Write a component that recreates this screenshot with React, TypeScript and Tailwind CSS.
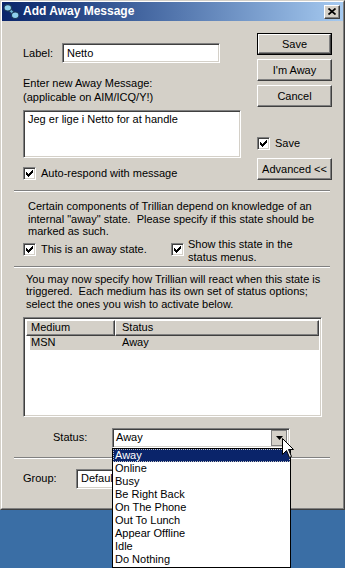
import React from "react";

const sunken =
  "border border-[#808080] border-r-white border-b-white shadow-[inset_1px_1px_0_#404040,inset_-1px_-1px_0_#d4d0c8]";
const raised =
  "border border-white border-r-[#404040] border-b-[#404040] shadow-[inset_-1px_-1px_0_#808080,inset_1px_1px_0_#d4d0c8]";

function Check() {
  return (
    <span className={`w-[13px] h-[13px] shrink-0 bg-white flex items-center justify-center ${sunken}`}>
      <svg width="7" height="7" viewBox="0 0 7 7">
        <path d="M0 2h1v1h1v1h1v-1h1v-1h1v-1h1v-1h1v3h-1v1h-1v1h-1v1h-1v1h-1v-1h-1v-1h-1z" fill="#000" />
      </svg>
    </span>
  );
}

function Btn({ children, def }: { children: React.ReactNode; def?: boolean }) {
  const inner = (
    <div className={`w-full h-full flex items-center justify-center bg-[#d4d0c8] ${raised}`}>{children}</div>
  );
  if (def) return <div className="w-[75px] h-[22px] border border-black">{inner}</div>;
  return <div className="w-[75px] h-[22px]">{inner}</div>;
}

function Sep() {
  return <div className="ml-[12px] w-[316px] h-0 border-t border-b border-t-[#808080] border-b-white" />;
}

function Arrow() {
  return (
    <svg width="7" height="4" viewBox="0 0 7 4">
      <path d="M0 0h7L3.5 4z" fill="#000" />
    </svg>
  );
}

export default function App() {
  const items = ["Away", "Online", "Busy", "Be Right Back", "On The Phone", "Out To Lunch", "Appear Offline", "Idle", "Do Nothing"];
  return (
    <div className="relative w-[345px] h-[568px] bg-[#3a6ea5] overflow-hidden text-[11px] leading-[13px] text-black font-['Liberation_Sans',Arial,sans-serif]">
      <div className="w-[345px] h-[510px] bg-[#d4d0c8] border border-[#d4d0c8] border-r-[#404040] border-b-[#404040]">
        <div className="h-full border border-white border-r-[#808080] border-b-[#808080] flex flex-col">
          {/* title bar */}
          <div className="h-[19px] flex items-center bg-linear-to-r from-[#0a246a] to-[#a6caf0] pr-[3px]">
            <svg className="ml-[1px]" width="17" height="17" viewBox="0 0 16 16">
              <path d="M4 4 L12 12" stroke="#1c3a5a" strokeWidth="4" strokeLinecap="round" />
              <path d="M4 4 L12 12" stroke="#6fb7d8" strokeWidth="2" strokeLinecap="round" />
              <ellipse cx="4.5" cy="4.5" rx="3.5" ry="3" fill="#8fd0ec" stroke="#1c3a5a" strokeWidth="1" />
              <ellipse cx="11.5" cy="11.5" rx="3.5" ry="3" fill="#8fd0ec" stroke="#1c3a5a" strokeWidth="1" />
            </svg>
            <span className="ml-[3px] text-white font-bold text-[12px]">Add Away Message</span>
            <div className="flex-1" />
            <div className={`w-[16px] h-[14px] bg-[#d4d0c8] flex items-center justify-center ${raised}`}>
              <svg width="8" height="7" viewBox="0 0 8 7">
                <path d="M0.5 0.5L7.5 6.5M7.5 0.5L0.5 6.5" stroke="#000" strokeWidth="1.7" />
              </svg>
            </div>
          </div>

          {/* top section */}
          <div className="flex pl-[21px]">
            <div className="w-[218px] flex flex-col">
              <div className="mt-[22px] h-[20px] flex items-center">
                <span className="w-[39px]">Label:</span>
                <div className={`w-[158px] h-[20px] bg-white flex items-center pl-[4px] ${sunken}`}>Netto</div>
              </div>
              <div className="mt-[13px] leading-[14px]">
                <div>Enter new Away Message:</div>
                <div>(applicable on AIM/ICQ/Y!)</div>
              </div>
              <div className={`mt-[6px] h-[48px] w-[218px] bg-white pl-[4px] pt-[2px] ${sunken}`}>
                Jeg er lige i Netto for at handle
              </div>
              <div className="mt-[9px] h-[13px] flex items-center">
                <Check />
                <span className="ml-[5px]">Auto-respond with message</span>
              </div>
            </div>
            <div className="ml-[16px] w-[75px] flex flex-col">
              <div className="mt-[12px]">
                <Btn def>Save</Btn>
              </div>
              <div className="mt-[4px]">
                <Btn>I'm Away</Btn>
              </div>
              <div className="mt-[4px]">
                <Btn>Cancel</Btn>
              </div>
              <div className="mt-[30px] h-[13px] flex items-center">
                <Check />
                <span className="ml-[5px]">Save</span>
              </div>
              <div className="mt-[8px]">
                <Btn>Advanced &lt;&lt;</Btn>
              </div>
            </div>
          </div>

          <div className="mt-[10px]">
            <Sep />
          </div>

          <div className="pl-[26px] mt-[8px] leading-[12.5px] whitespace-pre">
            <div>Certain components of Trillian depend on knowledge of an</div>
            <div>{'internal "away" state.  Please specify if this state should be'}</div>
            <div>marked as such.</div>
          </div>
          <div className="h-[28px] flex pl-[21px]">
            <div className="w-[148px] flex items-center h-[13px] mt-[5px]">
              <Check />
              <span className="ml-[5px]">This is an away state.</span>
            </div>
            <div className="flex items-start">
              <div className="mt-[5px]">
                <Check />
              </div>
              <div className="ml-[4px] leading-[13px]">
                <div>Show this state in the</div>
                <div>status menus.</div>
              </div>
            </div>
          </div>
          <Sep />

          <div className="pl-[24px] mt-[5px] leading-[12.5px] whitespace-pre">
            <div>You may now specify how Trillian will react when this state is</div>
            <div>triggered.  Each medium has its own set of status options;</div>
            <div>select the ones you wish to activate below.</div>
          </div>

          <div className="pl-[21px] mt-[6.5px]">
            <div className={`w-[299px] h-[100px] bg-white flex flex-col p-[2px] ${sunken}`}>
              <div className="h-[16px] flex">
                <div className={`w-[89px] h-full bg-[#d4d0c8] flex items-center pl-[4px] ${raised}`}>Medium</div>
                <div className={`flex-1 h-full bg-[#d4d0c8] flex items-center pl-[6px] ${raised}`}>Status</div>
              </div>
              <div className="ml-[4px] h-[14px] bg-[#d4d0c8] flex items-center">
                <span className="w-[92px] pl-[1px]">MSN</span>
                <span>Away</span>
              </div>
            </div>
          </div>

          <div className="mt-[11px] h-[20px] flex items-center pl-[51px]">
            <span className="w-[59px]">Status:</span>
            <div className={`w-[178px] h-[20px] bg-white flex items-center p-[2px] ${sunken}`}>
              <span className="flex-1 pl-[1px]">Away</span>
              <div className="w-[16px] h-[16px] bg-[#d4d0c8] border border-[#808080] flex items-center justify-center pl-[1px] pt-[1px]">
                <Arrow />
              </div>
            </div>
          </div>

          <div className="mt-[9px]">
            <Sep />
          </div>

          <div className="mt-[10px] h-[20px] flex items-center pl-[21px]">
            <span className="w-[53px]">Group:</span>
            <div className={`w-[213px] h-[20px] bg-white flex items-center pl-[4px] ${sunken}`}>Default</div>
          </div>
        </div>
      </div>

      {/* dropdown list */}
      <div className="absolute left-[112px] top-[448px] w-[179px] h-[120px] bg-white border border-black">
        {items.map((it, i) => (
          <div
            key={it}
            className={
              i === 0
                ? "h-[13px] flex items-center pl-[1px] bg-[#0a246a] text-white border border-dotted border-[#c0c0c0]"
                : "h-[13px] flex items-center pl-[2px]"
            }
          >
            {it}
          </div>
        ))}
      </div>

      {/* mouse cursor */}
      <svg className="absolute left-[282px] top-[438px]" width="13" height="21" viewBox="0 0 13 21">
        <path d="M0.5 0.5 L0.5 16.5 L4.5 12.5 L7.5 19.5 L9.5 18.5 L6.5 11.5 L11.5 11.5 Z" fill="#fff" stroke="#000" strokeWidth="1" />
      </svg>
    </div>
  );
}
